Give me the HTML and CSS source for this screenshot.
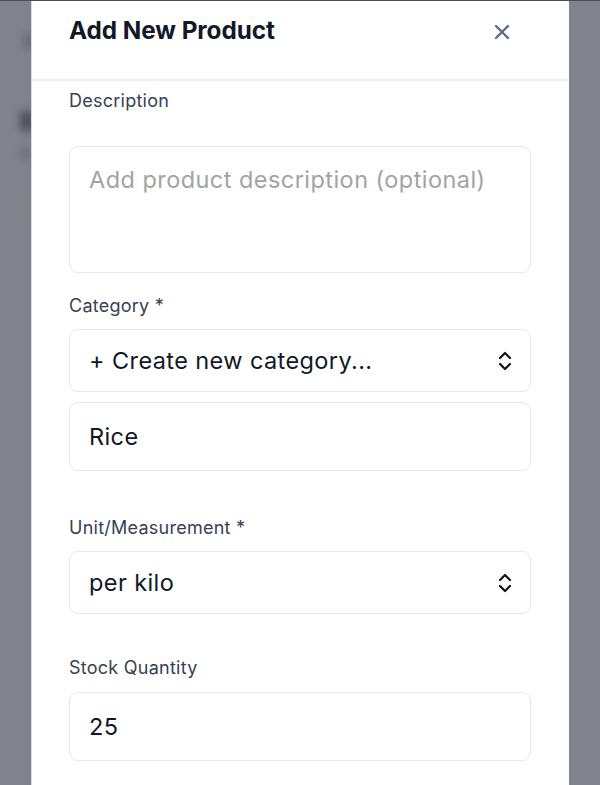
FILE: index.html
```html
<!DOCTYPE html>
<html lang="en">
<head>
<meta charset="utf-8">
<title>Add New Product</title>
<link rel="stylesheet" href="styles.css">
</head>
<body>
<div class="screen">
  <div class="backdrop backdrop-left">
    <span class="blur b1"></span>
    <span class="blur b2"></span>
    <span class="blur b3"></span>
    <span class="blur b4"></span>
  </div>
  <div class="modal">
    <header class="modal-header">
      <h1 class="modal-title">Add New Product</h1>
      <button class="close-btn" aria-label="Close">
        <svg width="16" height="16" viewBox="0 0 16 16" fill="none" stroke="currentColor" stroke-width="2.4" stroke-linecap="round"><path d="M2 2L14 14M14 2L2 14"/></svg>
      </button>
    </header>
    <div class="modal-body">
      <div class="field">
        <label class="label">Description</label>
        <div class="textarea">Add product description (optional)</div>
      </div>
      <div class="field field-category">
        <label class="label">Category *</label>
        <div class="select">
          <span>+ Create new category...</span>
          <svg class="chev" width="14" height="20" viewBox="0 0 14 20" fill="none" stroke="currentColor" stroke-width="2.2" stroke-linecap="round" stroke-linejoin="round"><path d="M2 7L7 2L12 7M2 13L7 18L12 13"/></svg>
        </div>
        <div class="input">Rice</div>
      </div>
      <div class="field field-unit">
        <label class="label">Unit/Measurement *</label>
        <div class="select">
          <span>per kilo</span>
          <svg class="chev" width="14" height="20" viewBox="0 0 14 20" fill="none" stroke="currentColor" stroke-width="2.2" stroke-linecap="round" stroke-linejoin="round"><path d="M2 7L7 2L12 7M2 13L7 18L12 13"/></svg>
        </div>
      </div>
      <div class="field field-stock">
        <label class="label">Stock Quantity</label>
        <div class="input">25</div>
      </div>
    </div>
  </div>
  <div class="backdrop backdrop-right"></div>
</div>
</body>
</html>
```
FILE: styles.css
```css
* { box-sizing: border-box; }
html, body { margin: 0; padding: 0; }
body {
  width: 600px;
  height: 785px;
  overflow: hidden;
  font-family: Inter, "Noto Sans", sans-serif;
  background: #80838d;
}
.screen {
  display: flex;
  height: 785px;
  border-top: 1px solid #4a4d55;
}
.backdrop {
  width: 31px;
  flex: none;
  background: #80838d;
  position: relative;
  overflow: hidden;
}
.blur {
  position: absolute;
  background: #5a5e6a;
  filter: blur(4px);
  border-radius: 4px;
}
.b1 { left: 24px; top: 32px; width: 10px; height: 16px; opacity: .7; }
.b2 { left: 20px; top: 110px; width: 14px; height: 20px; background: #4a4e5c; }
.b3 { left: 20px; top: 147px; width: 12px; height: 12px; opacity: .5; }
.b4 { left: 16px; top: 190px; width: 20px; height: 36px; background: #7d8688; opacity: .6; }
.modal {
  width: 538px;
  flex: none;
  background: #ffffff;
  border-left: 1px solid #d9dadd;
}
.modal-header {
  height: 80px;
  border-bottom: 2px solid #eceef1;
  display: flex;
  align-items: flex-start;
  justify-content: space-between;
  padding: 13px 59px 0 37px;
}
.modal-title {
  margin: 0;
  font-size: 24.3px;
  font-weight: 700;
  color: #111827;
  letter-spacing: -0.05px;
  line-height: 32px;
}
.close-btn {
  border: 0;
  background: none;
  padding: 0;
  margin-top: 10px;
  color: #5f6b7d;
  display: flex;
}
.modal-body {
  padding: 8px 38px 0 37px;
}
.field {
  display: flex;
  flex-direction: column;
}
.label {
  font-size: 18px;
  color: #374151;
  line-height: 24px;
  letter-spacing: 0.25px;
}
.textarea {
  margin-top: 33px;
  height: 127px;
  border: 1.5px solid #e5e7eb;
  border-radius: 9px;
  padding: 18px 19px;
  font-size: 23.5px;
  color: #a3a3a3;
  line-height: 30px;
  letter-spacing: 0.45px;
}
.field-category { margin-top: 21px; }
.select {
  margin-top: 11px;
  height: 63px;
  border: 1.5px solid #e5e7eb;
  border-radius: 9px;
  padding: 0 18px 0 19px;
  display: flex;
  align-items: center;
  justify-content: space-between;
  font-size: 23.5px;
  color: #111827;
  letter-spacing: 0.4px;
}
.chev { color: #111; }
.input {
  margin-top: 10px;
  height: 69px;
  border: 1.5px solid #e5e7eb;
  border-radius: 9px;
  padding: 0 19px;
  display: flex;
  align-items: center;
  font-size: 23.5px;
  color: #111827;
  letter-spacing: 0.4px;
}
.field-unit { margin-top: 45px; }
.field-unit .select { margin-top: 11px; }
.field-stock { margin-top: 42px; }
.field-stock .input { margin-top: 12px; }
```
